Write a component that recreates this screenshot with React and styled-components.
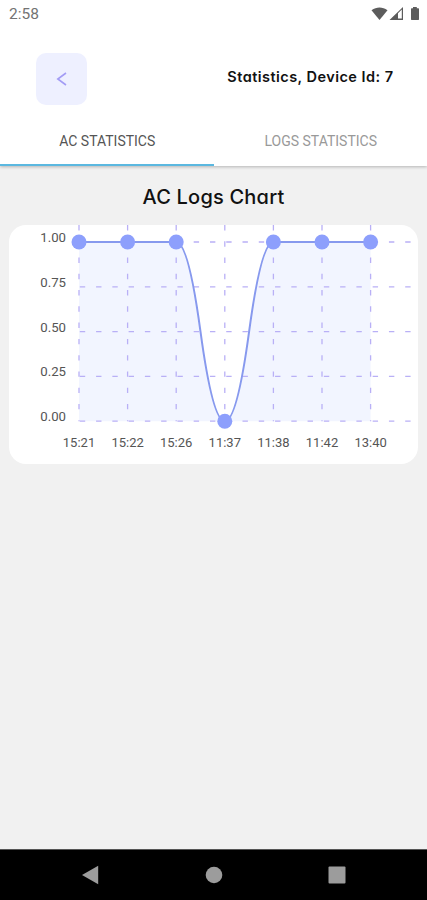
import React, { useState } from 'react';
import styled, { createGlobalStyle } from 'styled-components';

const LABELS = ['15:21', '15:22', '15:26', '11:37', '11:38', '11:42', '13:40'];
const VALUES = [1, 1, 1, 0, 1, 1, 1];
const TICKS = [1, 0.75, 0.5, 0.25, 0];
const TABS = ['AC STATISTICS', 'LOGS STATISTICS'];

const CHART_WIDTH = 409;
const CHART_HEIGHT = 239;
const LEFT = 70;
const RIGHT = 402;
const TOP = 17;
const BOTTOM = 196.2;
const STEP = 48.6;

const getX = (i) => LEFT + i * STEP;
const getY = (value) => BOTTOM - value * (BOTTOM - TOP);

const getLinePath = () =>
  VALUES.slice(1).reduce((path, value, i) => {
    const x = getX(i);
    const y = getY(VALUES[i]);
    const nextX = getX(i + 1);
    const nextY = getY(value);
    const midX = (x + nextX) / 2;
    const midY = (y + nextY) / 2;
    return `${path} Q ${(x + midX) / 2} ${y} ${midX} ${midY} Q ${(midX + nextX) / 2} ${nextY} ${nextX} ${nextY}`;
  }, `M ${getX(0)} ${getY(VALUES[0])}`);

const LogsChart = () => {
  const line = getLinePath();

  return (
    <ChartSvg viewBox={`0 0 ${CHART_WIDTH} ${CHART_HEIGHT}`}>
      <path d={`${line} L ${getX(6)} ${BOTTOM} L ${getX(0)} ${BOTTOM} Z`} fill="#f2f5ff" />
      {TICKS.map((tick) => (
        <GridLine key={tick} x1={LEFT + 0.8} x2={RIGHT} y1={getY(tick)} y2={getY(tick)} />
      ))}
      {LABELS.map((label, i) => (
        <GridLine key={label} x1={getX(i)} x2={getX(i)} y1={0} y2={BOTTOM} />
      ))}
      <Line d={line} />
      {VALUES.map((value, i) => (
        <Dot key={LABELS[i]} cx={getX(i)} cy={getY(value)} r="7.5" />
      ))}
      {TICKS.map((tick) => (
        <ChartText key={tick} x="57" y={getY(tick)} $anchor="end" $size="13.2px">
          {tick.toFixed(2)}
        </ChartText>
      ))}
      {LABELS.map((label, i) => (
        <ChartText key={label} x={getX(i)} y="222" $anchor="middle" $size="13px">
          {label}
        </ChartText>
      ))}
    </ChartSvg>
  );
};

const App = () => {
  const [active, setActive] = useState(0);

  return (
    <Screen>
      <GlobalStyle />
      <TopArea>
        <StatusBar>
          <span>2:58</span>
          <svg width="50" height="16" viewBox="0 0 50 16" fill="#5c5c5c">
            <path d="M-0.5 4.3C4.5 0.5 10.5 0.5 15.5 4.3L7.5 14Z" />
            <path d="M17.5 14L31 0.9V14Z M26 7.3V12.6H29.8V3.6Z" fillRule="evenodd" />
            <path d="M41 1.1H44.8V2.3H46.4Q47 2.3 47 3V13.3Q47 14 46.4 14H39.6Q39 14 39 13.3V3Q39 2.3 39.6 2.3H41Z" />
          </svg>
        </StatusBar>
        <Header>
          <BackButton aria-label="Back">
            <svg width="12" height="14" viewBox="0 0 12 14">
              <path d="M10 1L1.8 7L10 13" fill="none" stroke="#a39cf5" strokeWidth="1.6" />
            </svg>
          </BackButton>
          <HeaderTitle>Statistics, Device Id: 7</HeaderTitle>
        </Header>
        <TabBar>
          {TABS.map((tab, i) => (
            <Tab key={tab} $active={active === i} onClick={() => setActive(i)}>
              {tab}
            </Tab>
          ))}
        </TabBar>
      </TopArea>

      <Content>
        <ChartTitle>AC Logs Chart</ChartTitle>
        <ChartCard>
          <LogsChart />
        </ChartCard>
      </Content>

      <NavBar>
        <svg width="18" height="20" viewBox="0 0 18 20">
          <path d="M0 10L16.2 0.8V19.2Z" />
        </svg>
        <svg width="18" height="20" viewBox="0 0 18 20">
          <circle cx="9" cy="10" r="8.3" />
        </svg>
        <svg width="18" height="20" viewBox="0 0 18 20">
          <rect x="0.5" y="1.5" width="17" height="17" rx="1" />
        </svg>
      </NavBar>
    </Screen>
  );
};
export default App;

const GlobalStyle = createGlobalStyle`
  * {
    box-sizing: border-box;
  }
  body {
    margin: 0;
    font-family: Roboto, sans-serif;
  }
`;

const Screen = styled.div`
  width: 100%;
  height: 100vh;
  min-height: 900px;
  display: flex;
  flex-direction: column;
  background-color: #f1f1f1;
`;

const TopArea = styled.div`
  background-color: #fff;
  box-shadow: 0 1px 3px rgba(0, 0, 0, 0.25);
`;

const StatusBar = styled.div`
  height: 28px;
  padding: 0 5px 0 9px;
  display: flex;
  justify-content: space-between;
  align-items: center;
  font-size: 15.5px;
  color: #737373;

  svg {
    overflow: visible;
  }
`;

const Header = styled.header`
  height: 88px;
  padding: 25px 33.5px 0 36px;
  display: flex;
  justify-content: space-between;
  align-items: flex-start;
`;

const BackButton = styled.button`
  width: 51px;
  height: 52px;
  padding: 0;
  display: flex;
  justify-content: center;
  align-items: center;
  border: none;
  border-radius: 10px;
  background-color: #eef0ff;
`;

const HeaderTitle = styled.h1`
  margin: 0;
  font-family: Inter, sans-serif;
  font-feature-settings: 'cv11';
  font-weight: 600;
  font-size: 14.5px;
  letter-spacing: 0.46px;
  line-height: 48px;
  white-space: nowrap;
  color: #111;
`;

const TabBar = styled.div`
  display: flex;
  height: 50px;
`;

const Tab = styled.button`
  flex: 1;
  padding: 1px 0 0 1px;
  border: none;
  border-bottom: 2.5px solid ${(props) => (props.$active ? '#5bb8e0' : 'transparent')};
  background: none;
  font-family: inherit;
  font-size: 14px;
  color: ${(props) => (props.$active ? '#555' : '#999')};
`;

const Content = styled.main`
  flex: 1;
  padding: 16px 9px 0;
`;

const ChartTitle = styled.h2`
  margin: 0 0 13px;
  font-family: Inter, sans-serif;
  font-feature-settings: 'cv11';
  font-weight: 450;
  font-size: 20px;
  letter-spacing: 0.2px;
  line-height: 30px;
  text-align: center;
  color: #111;
`;

const ChartCard = styled.div`
  height: 239px;
  border-radius: 17px;
  overflow: hidden;
  background-color: #fff;
`;

const ChartSvg = styled.svg`
  display: block;
  width: 100%;
  height: 100%;
`;

const GridLine = styled.line`
  stroke: #b9b0f6;
  stroke-width: 1.3;
  stroke-dasharray: 5.4 10.87;
`;

const Line = styled.path`
  fill: none;
  stroke: #8799ee;
  stroke-width: 2;
`;

const Dot = styled.circle`
  fill: #8d9ffc;
`;

const ChartText = styled.text`
  font-family: Roboto, sans-serif;
  font-size: ${(props) => props.$size};
  text-anchor: ${(props) => props.$anchor};
  fill: #555;
`;

const NavBar = styled.nav`
  height: 51px;
  padding: 0 81px 0 82px;
  display: flex;
  justify-content: space-between;
  align-items: center;
  border-top: 1px solid #555;
  background-color: #000;
  fill: #9c9c9c;
`;
